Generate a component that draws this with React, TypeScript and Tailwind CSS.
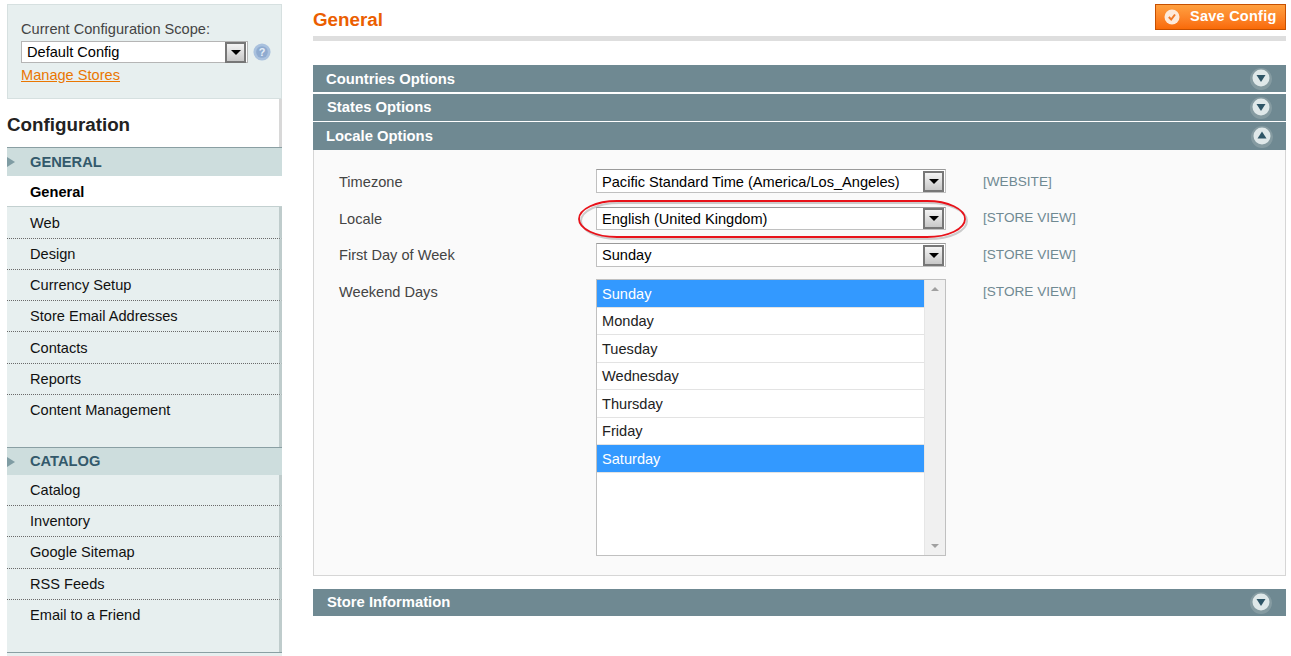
import React from 'react';

const font = { fontFamily: '"Liberation Sans", Arial, sans-serif' };

const Arrow: React.FC<{ up?: boolean }> = ({ up }) => (
  <svg width="24" height="24" viewBox="0 0 24 24">
    <circle cx="12" cy="12" r="11" fill="#8fa3a8" opacity="0.7" />
    <circle cx="12" cy="11" r="8.5" fill="#dfe8e9" />
    <path d={up ? 'M12 6.5 L16.5 13.5 L7.5 13.5 Z' : 'M7.5 8 L16.5 8 L12 15 Z'} fill="#2e5566" />
  </svg>
);

const SelectArrow: React.FC = () => (
  <div className="w-[21px] h-[21px] mr-px border-2 border-[#777] bg-gradient-to-b from-[#f4f4f4] to-[#c8c8c8] flex items-center justify-center">
    <div className="w-0 h-0 border-l-[5px] border-r-[5px] border-t-[5px] border-l-transparent border-r-transparent border-t-black" />
  </div>
);

const Select: React.FC<{ text: string; h: string; pt?: string }> = ({ text, h, pt = 'pt-[2px]' }) => (
  <div className={`${h} w-[350px] bg-white border border-[#c0c0c0] border-t-[#9a9a9a] flex items-center justify-between pl-[5px] text-[14.6px] text-black`}>
    <span className={pt}>{text}</span>
    <SelectArrow />
  </div>
);

const Bar: React.FC<{ title: string; h: string; up?: boolean; pl?: string; pt?: string }> = ({ title, h, up, pl = 'pl-[14px]', pt = 'pt-px' }) => (
  <div className={`${h} ${pl} bg-[#6f8992] flex items-center justify-between pr-[13px] text-white font-bold text-[14.8px]`}>
    <span className={pt}>{title}</span>
    <div className={up ? 'pt-[2px] pl-px -mr-px' : ''}>
      <Arrow up={up} />
    </div>
  </div>
);

type NavItem = { label: string; h: string; pt?: string; active?: boolean; last?: boolean };

const NavGroup: React.FC<{ title: string; items: NavItem[]; h: string }> = ({ title, items, h }) => (
  <div>
    <div className={`${h} border-t border-[#8a9fa3] bg-[#cddddd] flex items-center relative pl-[23px] text-[#33596b] font-bold text-[14.7px]`}>
      <div className="absolute left-0 top-[9px] w-0 h-0 border-t-[5px] border-b-[5px] border-l-[8px] border-t-transparent border-b-transparent border-l-[#7f9ca3]" />
      <span>{title}</span>
    </div>
    {items.map((it) => (
      <div
        key={it.label}
        className={`${it.h} ${it.pt ?? 'pt-[4px]'} pl-[23px] text-[14.6px] leading-[22px] ${it.active ? 'bg-white font-bold text-black border-b border-[#c3d0d0]' : 'bg-[#e7efef] text-[#111] border-r-[3px] border-r-[#bfcccc]'} ${!it.active && !it.last ? 'border-b border-b-[#6a6a6a] [border-bottom-style:dotted]' : ''}`}
      >
        {it.label}
      </div>
    ))}
  </div>
);

const general: NavItem[] = [
  { label: 'General', h: 'h-[31px]', pt: 'pt-[5px]', active: true },
  { label: 'Web', h: 'h-[32px]', pt: 'pt-[5px]' },
  { label: 'Design', h: 'h-[31px]' },
  { label: 'Currency Setup', h: 'h-[31px]' },
  { label: 'Store Email Addresses', h: 'h-[31px]' },
  { label: 'Contacts', h: 'h-[32px]', pt: 'pt-[5px]' },
  { label: 'Reports', h: 'h-[31px]' },
  { label: 'Content Management', h: 'h-[52px]', last: true },
];

const catalog: NavItem[] = [
  { label: 'Catalog', h: 'h-[31px]' },
  { label: 'Inventory', h: 'h-[31px]' },
  { label: 'Google Sitemap', h: 'h-[32px]' },
  { label: 'RSS Feeds', h: 'h-[31px]' },
  { label: 'Email to a Friend', h: 'h-[52px]', last: true },
];

const days = [
  { d: 'Sunday', on: true, h: 'h-[28px]' },
  { d: 'Monday', h: 'h-[27px]' },
  { d: 'Tuesday', h: 'h-[28px]' },
  { d: 'Wednesday', h: 'h-[27px]' },
  { d: 'Thursday', h: 'h-[28px]' },
  { d: 'Friday', h: 'h-[27px]' },
  { d: 'Saturday', on: true, h: 'h-[28px]' },
];

const Row: React.FC<{ label: string; scope: string; className?: string; labelPt: string; scopePt: string; children: React.ReactNode }> = ({ label, scope, className = '', labelPt, scopePt, children }) => (
  <div className={`flex items-start ${className}`}>
    <div className={`w-[282px] pl-[25px] ${labelPt} text-[14.6px] leading-[20px] text-[#444]`}>{label}</div>
    {children}
    <div className={`ml-[37px] ${scopePt} text-[13.6px] leading-[20px] text-[#6f8992]`}>{scope}</div>
  </div>
);

export default function App() {
  return (
    <div style={font} className="w-[1291px] h-[656px] overflow-hidden bg-white flex">
      <aside className="w-[275px] ml-[7px] mt-[4px] shrink-0">
        <div className="h-[95px] bg-[#e7efef] border border-[#d6e0e0] pl-[13px] pt-[16px] text-[14.6px]">
          <div className="text-[#444] leading-[17px]">Current Configuration Scope:</div>
          <div className="flex items-center mt-[3px]">
            <div className="w-[227px] h-[22px] bg-white border border-[#b5b5b5] flex items-center justify-between pl-[5px] text-black">
              <span className="pt-[2px]">Default Config</span>
              <SelectArrow />
            </div>
            <svg width="18" height="18" viewBox="0 0 20 20" className="ml-[5px]">
              <circle cx="10" cy="10" r="9.5" fill="#a9c1de" />
              <circle cx="10" cy="10" r="6.5" fill="#8fabd0" />
              <text x="10" y="14" textAnchor="middle" fontSize="12" fontWeight="bold" fill="#e6eef7">?</text>
            </svg>
          </div>
          <a className="block mt-[4px] text-[#ea7601] underline leading-[17px]">Manage Stores</a>
        </div>
        <div className="h-[48px] pt-[4px] bg-white border-r-[3px] border-r-[#d8d8d8] flex items-center text-[18.8px] font-bold text-[#222]">Configuration</div>
        <NavGroup title="GENERAL" h="h-[29px]" items={general} />
        <NavGroup title="CATALOG" h="h-[28px]" items={catalog} />
        <div className="h-[5px] border-t border-[#8a9fa3] bg-[#e7efef]" />
      </aside>

      <main className="w-[973px] ml-[31px] shrink-0">
        <div className="h-[41px] border-b-[5px] border-[#dedede] flex justify-between pt-[4px]">
          <h1 className="text-[18.8px] font-bold text-[#eb5e00] leading-[32px]">General</h1>
          <button className="w-[131px] h-[26px] bg-gradient-to-b from-[#ffa03f] to-[#f96a05] border border-[#c75000] flex items-center pl-[8px] text-white font-bold text-[14.5px]">
            <svg width="16" height="16" viewBox="0 0 16 16">
              <circle cx="8" cy="8" r="7.5" fill="#fdeadb" />
              <path d="M4.8 8 L7.2 10.5 L11 5.5" fill="none" stroke="#f07a28" strokeWidth="2" />
            </svg>
            <span className="ml-[10px] tracking-[0.25px]">Save Config</span>
          </button>
        </div>

        <div className="mt-[24px] flex flex-col">
          <Bar title="Countries Options" h="h-[27px]" pl="pl-[13px]" />
          <div className="mt-[2px]"><Bar title="States Options" h="h-[27px]" pt="pt-0" /></div>
          <div className="mt-px"><Bar title="Locale Options" h="h-[28px]" up pl="pl-[13px]" /></div>
          <div className="relative h-[426px] bg-[#fafafa] border border-t-0 border-[#d6d6d6] pt-[19px]">
            <Row label="Timezone" scope="[WEBSITE]" labelPt="pt-[3px]" scopePt="pt-[3px]">
              <Select text="Pacific Standard Time (America/Los_Angeles)" h="h-[24px]" pt="pt-[4px]" />
            </Row>
            <Row label="Locale" scope="[STORE VIEW]" className="mt-[14px]" labelPt="pt-[2px]" scopePt="pt-px">
              <Select text="English (United Kingdom)" h="h-[23px]" />
            </Row>
            <Row label="First Day of Week" scope="[STORE VIEW]" className="mt-[13px]" labelPt="pt-[2px]" scopePt="pt-[2px]">
              <Select text="Sunday" h="h-[24px]" pt="pt-[2px]" />
            </Row>
            <Row label="Weekend Days" scope="[STORE VIEW]" className="mt-[12px]" labelPt="pt-[3px]" scopePt="pt-[3px]">
              <div className="w-[350px] h-[277px] bg-white border border-[#c0c0c0] flex">
                <div className="flex-1">
                  {days.map((x) => (
                    <div key={x.d} className={`${x.h} pl-[5px] pt-[2px] flex items-center text-[14.6px] border-b border-[#e3e3e3] ${x.on ? 'bg-[#3399ff] text-white' : 'text-[#222]'}`}>{x.d}</div>
                  ))}
                </div>
                <div className="w-[21px] bg-[#f0f0f0] border-l border-[#e6e6e6] flex flex-col justify-between items-center py-[7px]">
                  <div className="w-0 h-0 border-l-[4px] border-r-[4px] border-b-[4px] border-l-transparent border-r-transparent border-b-[#a0a0a0]" />
                  <div className="w-0 h-0 border-l-[4px] border-r-[4px] border-t-[4px] border-l-transparent border-r-transparent border-t-[#a0a0a0]" />
                </div>
              </div>
            </Row>
            {/* red annotation drawn over the locale row */}
            <svg className="absolute left-[263px] top-[49px]" width="394" height="44" viewBox="0 0 394 44">
              <rect x="4" y="4" width="386" height="36" rx="38" ry="18" fill="none" stroke="#888" strokeOpacity="0.4" strokeWidth="2" />
              <rect x="2" y="2" width="386" height="36" rx="38" ry="18" fill="none" stroke="#e8121a" strokeWidth="1.8" />
            </svg>
          </div>
          <div className="mt-[13px]"><Bar title="Store Information" h="h-[27px]" pt="pt-0" /></div>
        </div>
      </main>
    </div>
  );
}
